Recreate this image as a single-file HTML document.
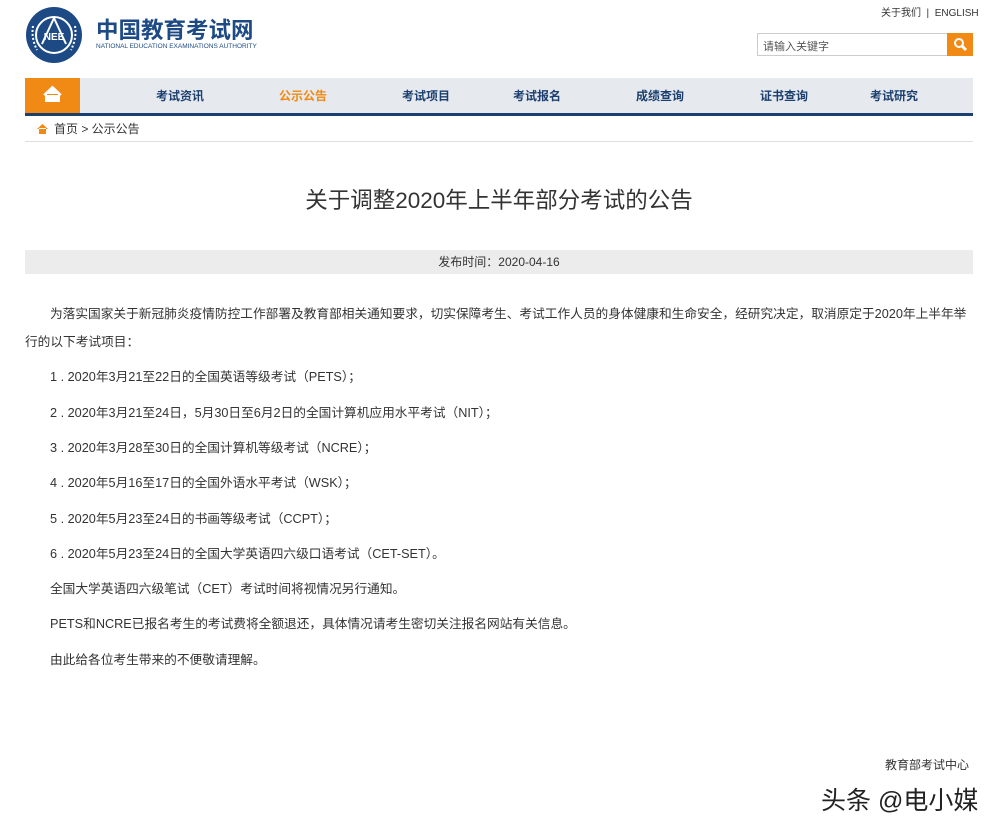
<!DOCTYPE html>
<html><head><meta charset="utf-8"><style>
*{margin:0;padding:0;box-sizing:border-box}
body{width:1000px;height:831px;background:#fff;font-family:"Liberation Sans","Noto Sans CJK SC",sans-serif;color:#333;position:relative;overflow:hidden}
.a{position:absolute;white-space:nowrap}
.nav{position:absolute;left:25px;top:78px;width:948px;background:#e6e9ed;border-bottom:3px solid #1b3f6e;height:38px}
.nav span{position:absolute;top:9px;font-size:12px;font-weight:bold;color:#1b3f6e}
.p{position:absolute;left:50px;font-size:12.7px;color:#333;white-space:nowrap}
</style></head><body>
<svg class="a" style="left:25px;top:6px" width="58" height="58" viewBox="0 0 58 58">
<circle cx="29" cy="29" r="28" fill="#1d4a85"/>
<circle cx="29" cy="29" r="18" fill="none" stroke="#fff" stroke-width="2"/>
<path d="M29 12 L17 38 M29 12 L41 38" stroke="#fff" stroke-width="2" fill="none"/>
<text x="29" y="34" font-size="10" fill="#fff" text-anchor="middle" font-family="Liberation Sans" font-weight="bold">NEE</text>
<path d="M8 20 Q6 32 12 44 M50 20 Q52 32 46 44" stroke="#fff" stroke-width="2" stroke-dasharray="2 2" fill="none"/>
</svg>
<div class="a" style="left:96px;top:13px;font-size:22.5px;font-weight:bold;color:#1d4a85">中国教育考试网</div>
<div class="a" style="left:96px;top:43px;font-size:6.5px;color:#1d4a85">NATIONAL EDUCATION EXAMINATIONS AUTHORITY</div>
<div class="a" style="left:881px;top:4px;font-size:10px;color:#333">关于我们 &nbsp;|&nbsp; ENGLISH</div>
<div class="a" style="left:757px;top:33px;width:191px;height:23px;border:1px solid #ccc;font-size:11px;color:#555;padding:4px 5px">请输入关键字</div>
<div class="a" style="left:947px;top:33px;width:26px;height:23px;background:#f08a14"><svg width="26" height="23"><circle cx="12" cy="10" r="4" stroke="#fff" stroke-width="2" fill="none"/><path d="M15 13l4 4" stroke="#fff" stroke-width="3"/></svg></div>
<div class="nav">
<div style="position:absolute;left:0;top:0;width:55px;height:35px;background:#f08a14"><svg width="55" height="35"><path d="M19 17 L27.5 9 L36 17 M21 16v7h13v-7" fill="#fff" stroke="#fff" stroke-width="2"/></svg></div>
<span style="left:131px">考试资讯</span>
<span style="left:254px;color:#f08a14">公示公告</span>
<span style="left:377px">考试项目</span>
<span style="left:488px">考试报名</span>
<span style="left:611px">成绩查询</span>
<span style="left:735px">证书查询</span>
<span style="left:845px">考试研究</span>
</div>
<svg class="a" style="left:36px;top:123px" width="13" height="12"><path d="M1 6L6.5 1 12 6M3 5v6h7V5" fill="#f08a14"/></svg>
<div class="a" style="left:54px;top:120px;font-size:12px">首页 &gt; 公示公告</div>
<div class="a" style="left:25px;top:141px;width:948px;height:1px;background:#ddd"></div>
<div class="a" style="left:0;width:998px;top:183px;text-align:center;font-size:22.5px;color:#333">关于调整2020年上半年部分考试的公告</div>
<div class="a" style="left:25px;top:250px;width:948px;height:24px;background:#ececec;text-align:center;font-size:12px;line-height:24px">发布时间：2020-04-16</div>
<div class="p" style="top:303px">为落实国家关于新冠肺炎疫情防控工作部署及教育部相关通知要求，切实保障考生、考试工作人员的身体健康和生命安全，经研究决定，取消原定于2020年上半年举</div>
<div class="p" style="top:331px;left:25px">行的以下考试项目：</div>
<div class="p" style="top:366px">1 . 2020年3月21至22日的全国英语等级考试（PETS）；</div>
<div class="p" style="top:402px">2 . 2020年3月21至24日，5月30日至6月2日的全国计算机应用水平考试（NIT）；</div>
<div class="p" style="top:437px">3 . 2020年3月28至30日的全国计算机等级考试（NCRE）；</div>
<div class="p" style="top:472px">4 . 2020年5月16至17日的全国外语水平考试（WSK）；</div>
<div class="p" style="top:508px">5 . 2020年5月23至24日的书画等级考试（CCPT）；</div>
<div class="p" style="top:543px">6 . 2020年5月23至24日的全国大学英语四六级口语考试（CET-SET）。</div>
<div class="p" style="top:578px">全国大学英语四六级笔试（CET）考试时间将视情况另行通知。</div>
<div class="p" style="top:613px">PETS和NCRE已报名考生的考试费将全额退还，具体情况请考生密切关注报名网站有关信息。</div>
<div class="p" style="top:649px">由此给各位考生带来的不便敬请理解。</div>
<div class="a" style="left:885px;top:756px;font-size:12px">教育部考试中心</div>
<div class="a" style="left:821px;top:781px;font-size:25px;color:#222">头条 @电小媒</div>
</body></html>
